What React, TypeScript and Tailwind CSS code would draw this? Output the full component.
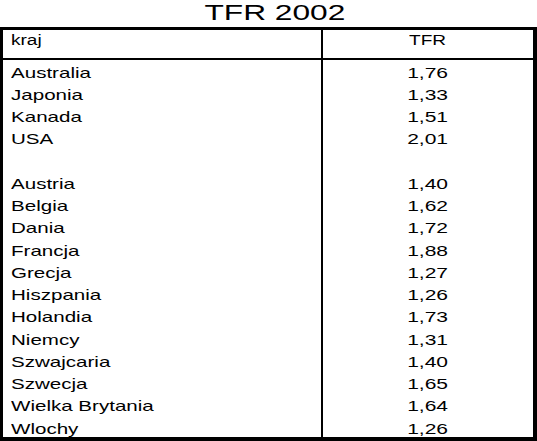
import React from "react";

const rows: [string, string][] = [
  ["Australia", "1,76"],
  ["Japonia", "1,33"],
  ["Kanada", "1,51"],
  ["USA", "2,01"],
  ["", ""],
  ["Austria", "1,40"],
  ["Belgia", "1,62"],
  ["Dania", "1,72"],
  ["Francja", "1,88"],
  ["Grecja", "1,27"],
  ["Hiszpania", "1,26"],
  ["Holandia", "1,73"],
  ["Niemcy", "1,31"],
  ["Szwajcaria", "1,40"],
  ["Szwecja", "1,65"],
  ["Wielka Brytania", "1,64"],
  ["Wlochy", "1,26"],
];

const App: React.FC = () => {
  return (
    <div className="w-[537px] h-[441px] bg-white text-black font-['Liberation_Sans',Arial,sans-serif] overflow-hidden">
      {/* Title */}
      <div className="h-[27px] pl-[12px] text-center text-[22px] leading-[26px]">
        <span className="inline-block scale-x-[1.44]">TFR 2002</span>
      </div>

      {/* Table */}
      <div className="border-t-[3px] border-l-[3px] border-r-4 border-b-4 border-black">
        {/* Header */}
        <div className="flex h-[30px] border-b-2 border-black text-[14px] leading-[16px]">
          <div className="w-[320px] border-r-2 border-black pl-[8px] pt-[2px]">
            <span className="inline-block scale-x-[1.36] origin-left">kraj</span>
          </div>
          <div className="flex-1 text-center pt-[2px]">
            <span className="inline-block scale-x-[1.36]">TFR</span>
          </div>
        </div>

        {/* Body */}
        <div className="flex h-[377px] overflow-hidden text-[15px] leading-[22.25px]">
          <div className="w-[320px] border-r-2 border-black pl-[8px] pt-[1.5px]">
            {rows.map(([name], i) => (
              <div key={i} className="h-[22.25px] whitespace-nowrap">
                <span className="inline-block scale-x-[1.37] origin-left">{name}</span>
              </div>
            ))}
          </div>
          <div className="flex-1 text-center pt-[1.5px]">
            {rows.map(([, tfr], i) => (
              <div key={i} className="h-[22.25px]">
                <span className="inline-block scale-x-[1.4]">{tfr}</span>
              </div>
            ))}
          </div>
        </div>
      </div>
    </div>
  );
};

export default App;
